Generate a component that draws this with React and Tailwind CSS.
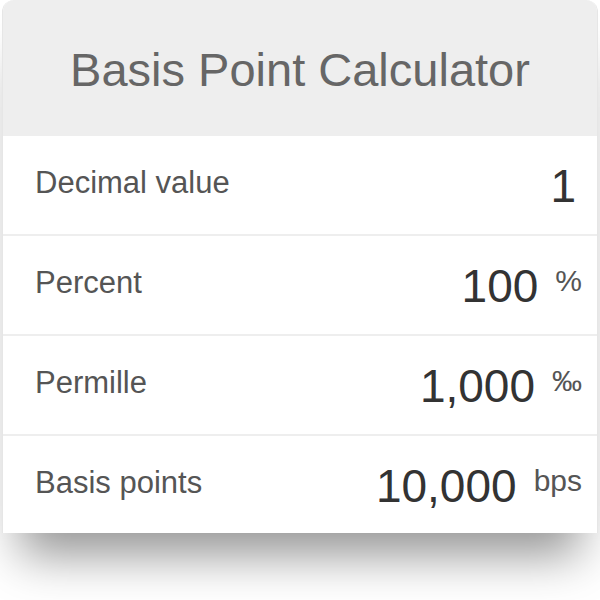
const ROWS = [
  { label: "Decimal value", value: "1", unit: null },
  { label: "Percent", value: "100", unit: "%" },
  { label: "Permille", value: "1,000", unit: "‰" },
  { label: "Basis points", value: "10,000", unit: "bps" },
];

export default function App() {
  return (
    <div className="w-[600px] h-[600px] bg-white px-[2px] font-[family-name:Liberation_Sans,Arial,sans-serif]">
      <div className="rounded-t-[12px] overflow-hidden border-x border-[#e6e6e6] bg-white shadow-[0_40px_45px_-18px_rgba(0,0,0,0.42)]">
        {/* Header */}
        <div className="h-[136px] bg-[#eeeeee] flex items-center justify-center">
          <h1 className="text-[47px] leading-none text-[#666666] pt-[2px]">
            Basis Point Calculator
          </h1>
        </div>

        {/* Rows */}
        {ROWS.map((row, i) => (
          <div
            key={row.label}
            className={`flex items-center justify-between pl-[32px] pr-[15px] ${
              i < ROWS.length - 1 ? "h-[100px] border-b-2 border-[#eeeeee]" : "h-[97px]"
            }`}
          >
            <span className="text-[31px] text-[#555555] pb-[3px]">{row.label}</span>
            <div className="flex items-start gap-[17px] pt-[2px]">
              <span className={`text-[46px] leading-none text-[#333333] ${row.unit ? "" : "pr-[6px]"}`}>
                {row.value}
              </span>
              {row.unit && (
                <span className="text-[30px] leading-none text-[#555555] pt-[3px]">{row.unit}</span>
              )}
            </div>
          </div>
        ))}
      </div>
    </div>
  );
}
